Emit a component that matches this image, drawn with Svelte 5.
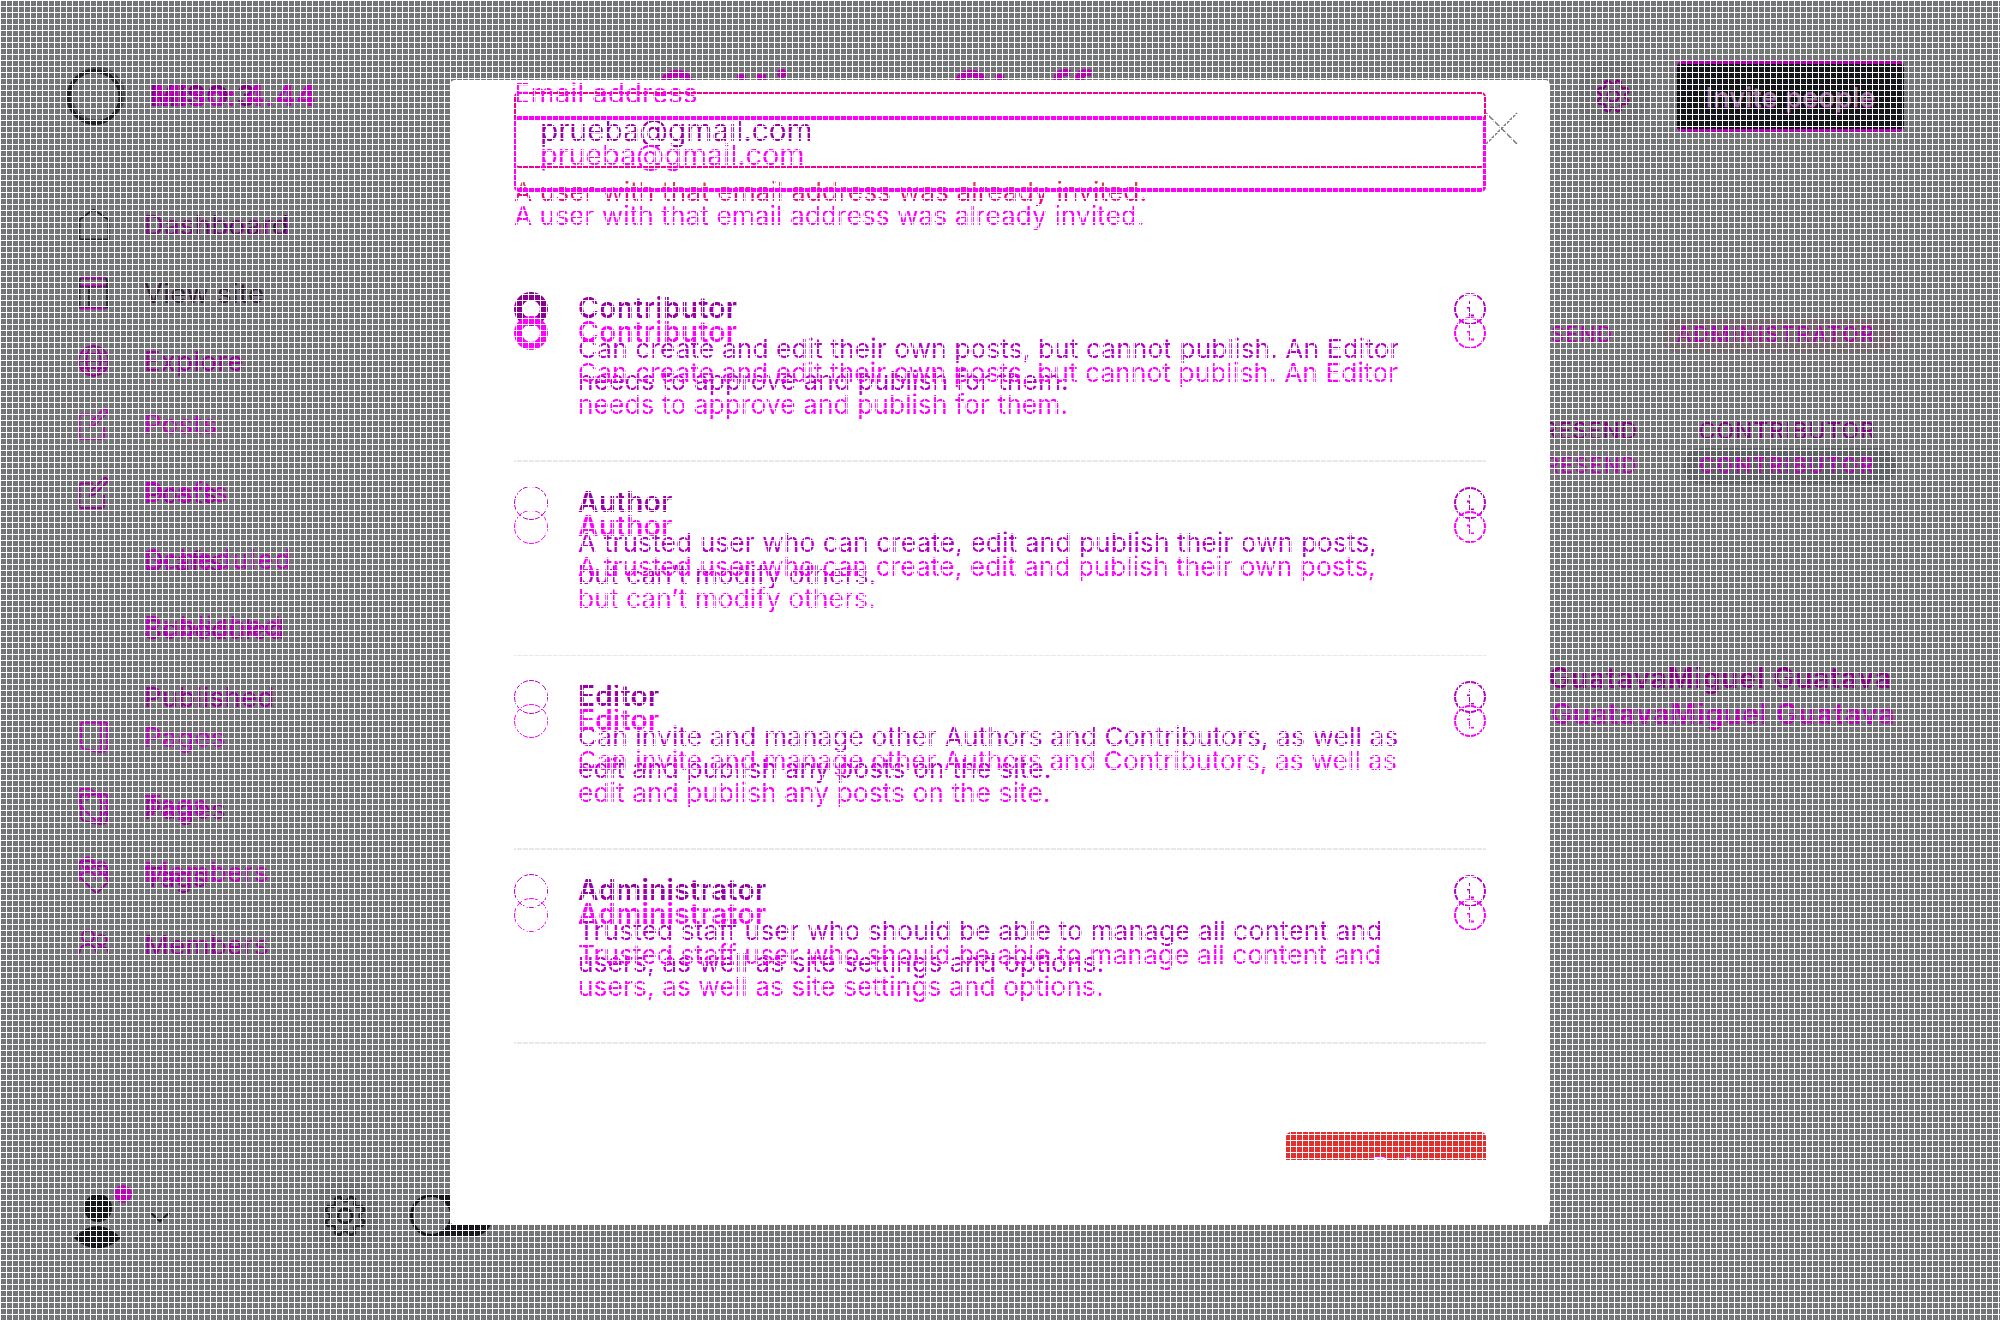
<script>
  const navBefore = [
    [['house', 'Dashboard'], ['window', 'View site'], ['globe', 'Explore']],
    [['edit', 'Posts'], ['', 'Drafts'], ['', 'Scheduled'], ['', 'Published']],
    [['page', 'Pages'], ['tag', 'Tags'], ['members', 'Members']]
  ];
  const navAfter = [
    [['', 'Dashboard'], ['', 'View site']],
    [['edit', 'Posts'], ['', 'Drafts'], ['', 'Scheduled'], ['', 'Published']],
    [['page', 'Pages'], ['tag', 'Tags'], ['members', 'Members']]
  ];
  const roles = [
    ['Contributor', 'Can create and edit their own posts, but cannot publish. An Editor', 'needs to approve and publish for them.'],
    ['Author', 'A trusted user who can create, edit and publish their own posts,', 'but can’t modify others.'],
    ['Editor', 'Can invite and manage other Authors and Contributors, as well as', 'edit and publish any posts on the site.'],
    ['Administrator', 'Trusted staff user who should be able to manage all content and', 'users, as well as site settings and options.']
  ];
  const gear = Array.from({ length: 97 }, (_, i) => {
    const a = (i / 96) * Math.PI * 2;
    const r = 17.4 + 2.6 * Math.tanh(2.4 * Math.cos(8 * (a + Math.PI / 8)));
    return `${i ? 'L' : 'M'}${(r * Math.cos(a)).toFixed(2)} ${(r * Math.sin(a)).toFixed(2)}`;
  }).join('');
</script>

{#snippet icon(name)}
  <svg class="icon" viewBox="0 0 32 32">
    {#if name === 'house'}
      <path d="M1 11 L14 1.5 Q15.500 .5 17 1.500 L31 11 M1.500 11V30.500H30.500V11" />
    {:else if name === 'window'}
      <path d="M1.500 3.500Q1.500 1.500 3.500 1.500H27Q29 1.500 29 3.500V30.500H1.500ZM1.500 9.500H29M11 9.500V30.500" />
      <path class="moved" d="M3 .8H28M3 8.500H28M2 31.500H28" />
    {:else if name === 'globe'}
      <circle cx="15.500" cy="16" r="14.800" />
      <ellipse cx="15.500" cy="16" rx="7" ry="14.800" />
      <path d="M.7 16H30.300M2.500 9H28.500M2.500 23H28.500" />
    {:else if name === 'edit'}
      <path d="M15 6.500H3.500Q1.500 6.500 1.500 8.500V29Q1.500 31 3.500 31H24Q26 31 26 29V18M12 19L13 14L25 2Q27 0 29 2Q30 3.500 29 5L17 17ZM12 19L17 17" />
    {:else if name === 'page'}
      <path d="M5 1.500H27Q29 1.500 29 4V26Q29 31 23 31Q22 31 10 29Q3 28 3 23V3Q3 1.500 5 1.500M10 1.500H21Q23 1.500 23 4V30" />
    {:else if name === 'tag'}
      <path d="M1.500 3Q1.500 0 4 0H13L29 18Q31 20 29 22L20 31Q18 32 16 30L1.500 16ZM9 5Q13 8 9 11Q4 9 9 5M18 5H26Q29 5 29 8V17" />
    {:else}
      <circle cx="10" cy="7.500" r="6" />
      <circle cx="23.500" cy="11" r="5" />
      <path d="M1 25Q2 15.500 10 15.500Q17 15.500 19 25M20 19Q29 15 31 25" />
    {/if}
  </svg>
{/snippet}

{#snippet cog(size)}
  <svg class="cog {size}" viewBox="-21 -21 42 42"><path d={gear} /><circle r="7" /></svg>
{/snippet}

{#snippet sidebar(groups, kind, title)}
  <aside class="side {kind}">
    <div class="brand"><span>{title}</span></div>
    {#each groups as group}
      <ul>
        {#each group as [name, label]}
          <li class={label.replace(' ', '-').toLowerCase()} class:sub={!name}>
            <span class="slot">{#if name}{@render icon(name)}{/if}</span>
            <span>{label}</span>
          </li>
        {/each}
      </ul>
    {/each}
  </aside>
{/snippet}

{#snippet form(kind)}
  <form class="sheet {kind}">
    <div class="field">
      {#if kind === 'after'}<label for="mail">Email address</label>{/if}
      <div class="input"><span>prueba@gmail.com</span></div>
    </div>
    <p class="error">A user with that email address was already invited.</p>
    {#each roles as [name, first, second]}
      <section class="role">
        <i class="radio" class:on={name === 'Contributor'}></i>
        <div class="copy">
          <h4>{name}</h4>
          <p>{first}</p>
          <p>{second}</p>
        </div>
        <svg class="info" viewBox="0 0 32 32">
          <circle cx="16" cy="16" r="15" />
          <path d="M16 8V11M13 14.500H16V22.500H20" />
        </svg>
      </section>
    {/each}
    {#if kind === 'before'}
      <div class="submit">
        <svg viewBox="0 0 24 24"><path d="M3 12A9 9 0 0 1 20 8M20 2V8H14M21 14A9 9 0 0 1 4 17" /></svg>
        <span>Retry</span>
      </div>
    {/if}
  </form>
{/snippet}

<div class="page">
  <div class="sides">
    {@render sidebar(navBefore, 'before', 'MISO 3')}
    {@render sidebar(navAfter, 'after', 'Miso: 4.44')}
    <svg class="ring" viewBox="0 0 60 60">
      <circle cx="28.500" cy="31" r="26" stroke-width="4" />
      <circle cx="31.500" cy="28.500" r="26.500" stroke-width="2.500" opacity=".5" />
    </svg>
    <footer>
      <svg class="person" viewBox="0 0 66 66">
        <circle class="halo" cx="32" cy="33" r="32" />
        <circle cx="32" cy="25" r="14" />
        <path d="M8 55Q31 31 55 55Q31 76 8 55Z" />
        <circle class="dot" cx="57" cy="11" r="9" />
      </svg>
      <svg class="chevron" viewBox="0 0 24 14"><path d="M1 1L12 11L23 1" /></svg>
      <span class="settings">{@render cog('large')}</span>
      <span class="toggle"><i></i></span>
    </footer>
  </div>

  <main>
    <header>
      <h1><span>Settings</span><span>Staff</span></h1>
      <span class="tools">{@render cog('small')}</span>
      <button>Invite people</button>
    </header>
    <div class="rows">
      <div class="row admin"><span>RESEND</span><span class="badge">ADMINISTRATOR</span></div>
      <div class="row contrib"><span>RESEND</span><span class="badge">CONTRIBUTOR</span></div>
      <div class="row contrib late"><span>RESEND</span><span class="badge">CONTRIBUTOR</span></div>
      <div class="row user">GuatavaMiguel Guatava</div>
      <div class="row user late">GuatavaMiguel Guatava</div>
    </div>
  </main>

  <div class="modal">
    {@render form('before')}
    {@render form('after')}
    <svg class="close" viewBox="0 0 32 32"><path d="M0 0L32 32M32 0L0 32" /></svg>
  </div>
  <div class="mesh"></div>
</div>

<style>
  :global(body) { margin: 0; }
  .page {
    position: relative;
    width: 2000px;
    height: 1320px;
    overflow: hidden;
    display: grid;
    grid-template-columns: 450px 1550px;
    background: #747577;
    font: 26.25px/32px Inter, sans-serif;
  }
  h1, h4, p, ul { margin: 0; padding: 0; }
  svg { display: block; overflow: visible; fill: none; stroke: currentColor; }
  .sides { display: grid; height: 1320px; }
  .side { grid-area: 1 / 1; color: #9b009b; }
  .side.after { color: #c000c0; }
  .brand { height: 191px; box-sizing: border-box; padding: 77px 0 0 150px; line-height: 38px; font-weight: 700; font-size: 29px; letter-spacing: .7px; color: #850085; white-space: nowrap; }
  .after .brand { height: 191px; color: #c000c0; padding-left: 153px; letter-spacing: 1.100px; }
  ul { list-style: none; margin-bottom: 64px; }
  ul + ul { margin-bottom: 44px; }
  li { height: 68px; display: flex; align-items: center; padding-left: 78px; font-size: 27.400px; letter-spacing: .4px; }
  .after li { height: 67.300px; }
  .after li.sub { letter-spacing: 1.200px; }
  .after ul:nth-of-type(1) { margin-bottom: 65px; }
  .before .dashboard, .before .view-site { color: #242529; }
  .after li.dashboard { color: rgb(192 0 192 / .6); letter-spacing: .7px; }
  .after li.view-site { color: rgb(192 0 192 / .15); letter-spacing: .5px; }
  .moved { stroke: #c000c0; }
  .slot { width: 66px; }
  .icon { width: 32px; height: 32px; stroke-width: 1.800; }
  .before .dashboard .icon { stroke-width: 2; }
  .ring { grid-area: 1 / 1; width: 60px; height: 60px; margin: 66px 0 0 66px; stroke: #202124; }
  footer { grid-area: 1 / 1; align-self: end; height: 137px; display: flex; align-items: flex-start; }
  .person { width: 66px; height: 66px; margin: 0 0 0 66px; fill: #17181b; stroke: none; }
  .person .halo { fill: none; stroke: #6d6e70; }
  .person .dot { fill: #c000c0; }
  .chevron { width: 22px; height: 13px; margin: 28px 0 0 17px; stroke: #202124; stroke-width: 2.400; }
  .settings { margin: -4px 0 0 137px; width: 74px; height: 74px; border-radius: 50%; background: #6d6e70; display: grid; place-items: center; }
  .cog { color: #202124; stroke-width: 2.800; }
  .cog.large { width: 42px; height: 42px; }
  .cog.small { width: 34px; height: 36px; color: #850085; }
  .toggle { flex: none; width: 83px; height: 43px; margin: 11px 0 0 28px; border-radius: 22px; background: #17181b; box-sizing: border-box; padding: 3px; }
  .toggle i { display: block; width: 37px; height: 37px; border-radius: 50%; background: #747577; }

  header { height: 190px; display: flex; align-items: flex-start; }
  h1 { width: 1120px; padding: 62px 0 0 207px; box-sizing: border-box; display: grid; grid-template-columns: 294px auto; font-size: 60px; line-height: 62px; color: #b900b9; }
  .tools { width: 74px; height: 74px; margin: 59px 0 0 6px; border-radius: 50%; background: #6d6e70; display: grid; place-items: center; }
  button { width: 227px; height: 71px; margin: 61px 0 0 27px; padding: 0; border: solid #b000b0; border-width: 3px 0 3px; border-radius: 5px; background: #15171a; color: #8a748c; font: 500 27.700px Inter, sans-serif; text-shadow: 0 1px 0 #a000a0; }
  .rows { width: 1446px; display: grid; }
  .row { grid-area: 1 / 1; display: flex; justify-content: flex-end; align-items: center; height: 37px; font-size: 21px; letter-spacing: 1.500px; color: #b400b4; white-space: nowrap; }
  .row.admin { margin-top: 126px; gap: 47px; }
  .badge { height: 36px; line-height: 36px; padding: 0 20px 0 16px; border-radius: 18px; font-weight: 500; letter-spacing: 2px; background: #75696e; }
  .row.contrib { margin-top: 222px; gap: 45px; font-size: 23px; letter-spacing: .7px; color: #850085; }
  .row.contrib .badge { background: none; font-weight: 400; letter-spacing: 1px; }
  .row.contrib.late { margin-top: 257px; color: #bd00bd; font-size: 21px; letter-spacing: 1.600px; }
  .row.contrib.late .badge { background: #606365; font-weight: 500; letter-spacing: 2.200px; }
  .row.user { margin-top: 469px; padding-right: 4px; font-size: 28px; font-weight: 600; letter-spacing: .95px; color: #8c008c; }
  .row.user.late { margin-top: 505px; padding-right: 0; color: #bd00bd; letter-spacing: 1.050px; }

  .modal { position: absolute; left: 450px; top: 80px; width: 1100px; height: 1145px; border-radius: 5px; background: #fff; display: grid; align-items: start; }
  .sheet { grid-area: 1 / 1; padding: 12px 65px 0 64px; color: #b800c8; }
  .sheet.after { color: #f0f; padding-top: 0; }
  .field { display: grid; }
  label { height: 36px; line-height: 27px; font-size: 27.400px; letter-spacing: .25px; }
  .input { height: 76px; box-sizing: border-box; border: 2px solid #f0008c; border-radius: 5px; padding-left: 24px; line-height: 73px; font-size: 29.700px; color: #9b00a5; }
  .after .input { border: 4px solid #f0f; border-left-width: 3px; padding-left: 23px; line-height: 70px; font-size: 28.800px; color: #f0f; }
  .after .input span { display: inline-block; line-height: 35px; border-right: 1px solid #f0f; }
  .error { margin: 8px 0 60px 0; letter-spacing: .1px; }
  .after .error { letter-spacing: .05px; }
  .before .error { color: transparent; background: linear-gradient(#d83c50 45%, #f0008c 55%); background-clip: text; }
  .role { height: 194px; box-sizing: border-box; padding-top: 24px; display: flex; align-items: flex-start; border-bottom: 2px solid #e8e8e8; }
  .after .role { border-color: transparent; }
  .radio { width: 34px; height: 34px; box-sizing: border-box; border: 1.500px solid currentColor; border-radius: 50%; }
  .radio.on { border: 8.500px solid #8a008f; }
  .after .radio.on { border-color: #f0f; }
  .copy { flex: 1; padding: 0 0 0 30px; white-space: nowrap; }
  h4 { font-size: 28px; margin-bottom: 9px; font-weight: 600; letter-spacing: .3px; color: #9b00a5; }
  .after h4 { color: #f0f; }
  .copy p { letter-spacing: .12px; }
  .after .copy p { letter-spacing: .1px; }
  .info { width: 32px; height: 32px; margin-top: 1px; stroke-width: 2; }
  .submit { width: 200px; height: 28px; margin: 88px 0 0 772px; overflow: hidden; border-radius: 5px 5px 0 0; background: #e2302f; color: #fff; display: flex; gap: 18px; justify-content: center; line-height: 69px; box-sizing: border-box; padding-right: 3px; font-weight: 500; text-shadow: 0 -1px 0 #f0f; }
  .submit svg { width: 24px; height: 24px; margin-top: 26px; stroke-width: 1; }
  .close { position: absolute; left: 1036px; top: 33px; width: 31px; height: 31px; color: #777; stroke-width: 1.500; }
  .mesh {
    position: absolute;
    inset: 0;
    background-image: linear-gradient(90deg, #fff 1px, transparent 1px), linear-gradient(#fff 1px, transparent 1px);
    background-size: 6px 6px;
  }
</style>
